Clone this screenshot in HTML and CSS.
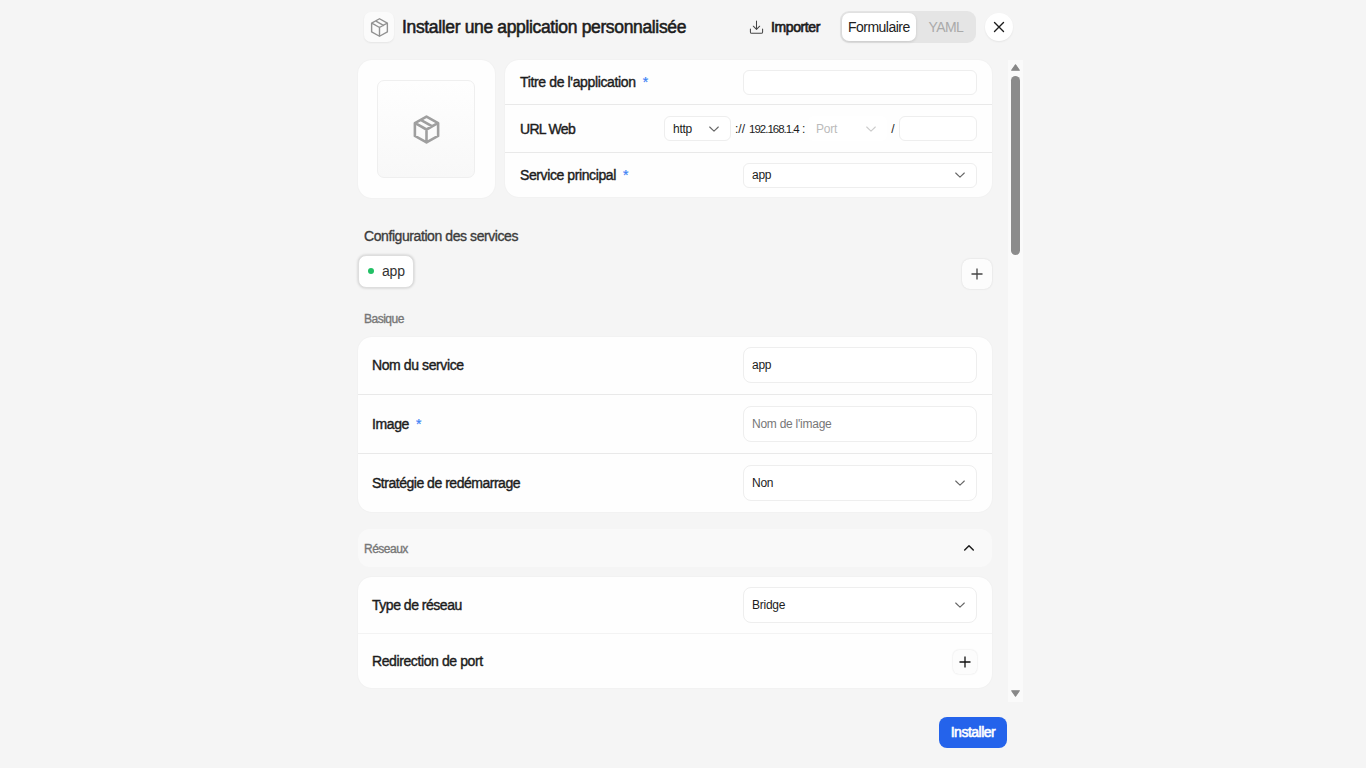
FILE: index.html
```html
<!DOCTYPE html>
<html lang="fr">
<head>
<meta charset="utf-8">
<title>Installer une application personnalisée</title>
<link rel="stylesheet" href="styles.css">
</head>
<body>
<svg class="defs" width="0" height="0">
  <symbol id="box" viewBox="0 0 24 24"><path d="M12 2 21 7V17L12 22 3 17V7ZM3.300 7.100 12 12l8.700-4.900M12 12v10M7.500 4.500l9 5.100"/></symbol>
  <symbol id="down" viewBox="0 0 12 12"><path d="M1.700 4 6 8.200 10.300 4"/></symbol>
  <symbol id="plus" viewBox="0 0 12 12"><path d="M6 .5v11M.5 6h11"/></symbol>
</svg>
<main class="dialog">
  <header class="head">
    <span class="logo"><svg class="ico"><use href="#box"/></svg></span>
    <h1>Installer une application personnalisée</h1>
    <button class="import"><svg class="ico" viewBox="0 0 16 16"><path d="M8 1.200v8.600M4.600 6.600 8 10l3.400-3.400M1.500 9.500v3.200q0 1.500 1.500 1.500h10q1.500 0 1.500-1.500V9.500"/></svg><span>Importer</span></button>
    <div class="tabs"><span class="tab on">Formulaire</span><span class="tab">YAML</span></div>
    <button class="close"><svg class="ico" viewBox="0 0 12 12"><path d="M1.500 1.500l9 9M10.500 1.500l-9 9"/></svg></button>
  </header>
  <div class="middle">
    <div class="content">
      <section class="top">
        <div class="card picture"><div class="thumb"><svg class="ico"><use href="#box"/></svg></div></div>
        <div class="card fields">
          <div class="row"><label class="wide">Titre de l'application<i>*</i></label><div class="input"></div></div>
          <div class="row"><label class="url">URL Web</label>
            <div class="address">
              <div class="input proto"><span>http</span><svg class="ico arrow"><use href="#down"/></svg></div>
              <span class="scheme">://</span><span class="host">192.168.1.4</span><span class="colon">:</span>
              <div class="input port"><span>Port</span><svg class="ico arrow"><use href="#down"/></svg></div>
              <span class="slash">/</span>
              <div class="input path"></div>
            </div>
          </div>
          <div class="row"><label>Service principal<i>*</i></label><div class="input"><span>app</span><svg class="ico arrow"><use href="#down"/></svg></div></div>
        </div>
      </section>
      <h2>Configuration des services</h2>
      <div class="services">
        <span class="service"><b class="dot"></b>app</span>
        <button class="add"><svg class="ico"><use href="#plus"/></svg></button>
      </div>
      <h3>Basique</h3>
      <section class="card basic">
        <div class="row"><label>Nom du service</label><div class="input"><span>app</span></div></div>
        <div class="row"><label>Image<i>*</i></label><div class="input hint"><span>Nom de l'image</span></div></div>
        <div class="row"><label class="tight">Stratégie de redémarrage</label><div class="input"><span>Non</span><svg class="ico arrow"><use href="#down"/></svg></div></div>
      </section>
      <div class="fold"><h3>Réseaux</h3><svg class="ico" viewBox="0 0 12 12"><path d="M1.700 8 6 3.800 10.300 8"/></svg></div>
      <section class="card net">
        <div class="row"><label class="tight">Type de réseau</label><div class="input"><span>Bridge</span><svg class="ico arrow"><use href="#down"/></svg></div></div>
        <div class="row last"><label>Redirection de port</label><button class="add small"><svg class="ico"><use href="#plus"/></svg></button></div>
      </section>
    </div>
    <div class="scroll">
      <svg class="tip" viewBox="0 0 10 8"><path d="M5 1.500 8.500 6.500H1.500Z"/></svg>
      <div class="thumbbar"></div>
      <svg class="tip end" viewBox="0 0 10 8"><path d="M5 6.500 8.500 1.500H1.500Z"/></svg>
    </div>
  </div>
  <footer><button class="install">Installer</button></footer>
</main>
</body>
</html>
```
FILE: styles.css
```css
* { box-sizing: border-box; }
body { margin: 0; background: #f5f5f5; color: #1c1c1c; font: 14px/20px "Liberation Sans", Arial, sans-serif; overflow: hidden; }
h1, h2, h3 { margin: 0; font-weight: 400; }
button { border: 0; padding: 0; margin: 0; font: inherit; color: inherit; background: none; display: flex; align-items: center; justify-content: center; }
.defs { position: absolute; }
.ico { fill: none; stroke: currentColor; stroke-width: 1.1; stroke-linecap: round; stroke-linejoin: round; flex: none; }
.dialog { width: 665px; height: 768px; margin-left: 358px; display: flex; flex-direction: column; }

.head { height: 60px; padding: 0 9px 6px 6px; display: flex; align-items: center; }
.logo { width: 30px; height: 30px; border-radius: 7px; background: #fbfbfb; box-shadow: 0 1px 2px #0001; display: flex; align-items: center; justify-content: center; color: #929292; }
.logo .ico { width: 21px; height: 21px; stroke-width: 1.6; }
h1 { margin-left: 8px; width: 347px; white-space: nowrap; font-size: 17.5px; line-height: 24px; letter-spacing: -.35px; -webkit-text-stroke: .55px; }
.import { width: 71px; justify-content: space-between; letter-spacing: -.4px; -webkit-text-stroke: .65px; white-space: nowrap; }
.import .ico { width: 15px; height: 15px; stroke: #444; }
.tabs { margin-left: 20px; width: 136px; height: 32px; padding: 2px; border-radius: 9px; background: #e5e5e5; display: flex; }
.tab { width: 58px; display: flex; align-items: center; justify-content: center; letter-spacing: -.6px; color: #aaa; }
.tab.on { width: 76px; background: #fff; color: #222; border-radius: 7px; box-shadow: 0 1px 3px #0002; letter-spacing: -.5px; margin-right: 2px; }
.close { margin-left: 9px; width: 28px; height: 28px; border-radius: 50%; background: #fff; box-shadow: 0 1px 2px #0001; }
.close .ico { width: 12px; height: 12px; stroke-width: 1.4; }

.middle { height: 642px; display: flex; justify-content: space-between; }
.content { width: 634px; }
.card { background: #fefefe; border-radius: 14px; box-shadow: 0 0 2px #0000000d; }
.top { display: flex; gap: 10px; }
.picture { width: 137px; height: 138px; display: flex; align-items: center; justify-content: center; padding-right: 1px; }
.thumb { width: 98px; height: 98px; border: 1px solid #efefef; border-radius: 7px; background: linear-gradient(#fefefe, #f8f8f8); display: flex; align-items: center; justify-content: center; color: #9f9f9f; }
.thumb .ico { width: 31px; height: 31px; stroke-width: 2; stroke-linecap: butt; }
.fields { width: 487px; height: 137px; }
.row { display: flex; align-items: center; justify-content: space-between; padding: 0 15px 0 14px; height: 59px; border-bottom: 1px solid #e9e9e9; }
.row:last-child { border-bottom: 0; }
.fields .row { height: 48px; padding-left: 15px; }
.fields .row:first-child { height: 45px; }
.fields .row:last-child { height: 44px; }
label { letter-spacing: -.4px; -webkit-text-stroke: .4px; white-space: nowrap; }
.wide { letter-spacing: -.36px; }
.tight { letter-spacing: -.48px; }
.url { letter-spacing: -.7px; }
label i { color: #3b82f6; font-style: normal; margin-left: 7px; -webkit-text-stroke: .2px; }
.input { width: 234px; height: 36px; padding: 0 10px 1px 8px; border: 1px solid #eee; border-radius: 8px; background: #fff; display: flex; align-items: center; justify-content: space-between; font-size: 12px; letter-spacing: -.25px; }
.fields .input { height: 25px; padding-bottom: 0; border-radius: 6px; }
.hint { color: #777; }
.arrow { width: 12px; height: 12px; color: #666; }
.address { display: flex; align-items: center; font-size: 12px; white-space: nowrap; }
.address .proto { width: 67px; }
.scheme { width: 14px; margin-left: 4px; }
.host { width: 53px; font-size: 11.5px; letter-spacing: -1px; }
.colon { width: 6px; }
.address .port { width: 79px; border-color: transparent; color: #bbb; padding: 0 9px 0 7px; }
.port .arrow { color: #ccc; }
.slash { width: 12px; text-align: center; }
.address .path { width: 78px; }

h2 { margin: 28px 0 0 6px; font-size: 14px; line-height: 20px; letter-spacing: -.42px; color: #3c3c3c; -webkit-text-stroke: .35px; }
.services { margin-top: 9px; height: 34px; display: flex; justify-content: space-between; }
.service { width: 56px; height: 33px; border: 1px solid #dedede; border-radius: 8px; background: #fff; box-shadow: 0 0 3px #0003; display: flex; align-items: center; padding: 0 0 2px 9px; color: #333; letter-spacing: -.2px; }
.dot { width: 6px; height: 6px; border-radius: 50%; background: #22c065; margin: 1px 8px 0 0; }
.add { width: 30px; height: 30px; margin: 4px 0 0; border-radius: 8px; background: #fcfcfc; box-shadow: 0 0 2px #0002; color: #444; padding: 0 1px 1px 0; }
.add .ico { width: 12px; height: 12px; stroke-width: 1.3; stroke-linecap: butt; }
h3 { margin: 20px 0 0 6px; font-size: 12px; line-height: 20px; letter-spacing: -.5px; color: #777; -webkit-text-stroke: .35px; }
.basic { margin-top: 8px; height: 175px; }
.basic .row:first-child { height: 58px; padding-bottom: 1px; }
.basic .row:last-child { height: 58px; }
.fold { margin-top: 17px; height: 38px; background: #f9f9f9; border-radius: 12px; display: flex; align-items: center; justify-content: space-between; padding-right: 17px; }
.fold h3 { margin-top: 2px; }
.fold .ico { width: 12px; height: 12px; stroke-width: 1.5; }
.net { margin-top: 10px; height: 111px; }
.net .row { height: 57px; border-color: #f3f3f3; }
.net .last { height: 54px; }
.add.small { width: 24px; height: 24px; margin: 2px 0 0; border-radius: 6px; color: #111; }

.scroll { width: 15px; background: #fafafa; display: flex; flex-direction: column; align-items: center; padding-top: 3px; }
.tip { width: 11px; height: 9px; fill: #888; stroke: #888; stroke-linejoin: round; }
.thumbbar { width: 9px; height: 179px; margin-top: 4px; border-radius: 5px; background: #8b8b8b; }
.end { margin-top: auto; margin-bottom: 4px; }
footer { padding: 15px 16px 0 0; display: flex; justify-content: flex-end; }
.install { width: 68px; height: 31px; padding-bottom: 1px; border-radius: 8px; background: #2463eb; color: #fff; letter-spacing: -.5px; -webkit-text-stroke: .6px; }
```
